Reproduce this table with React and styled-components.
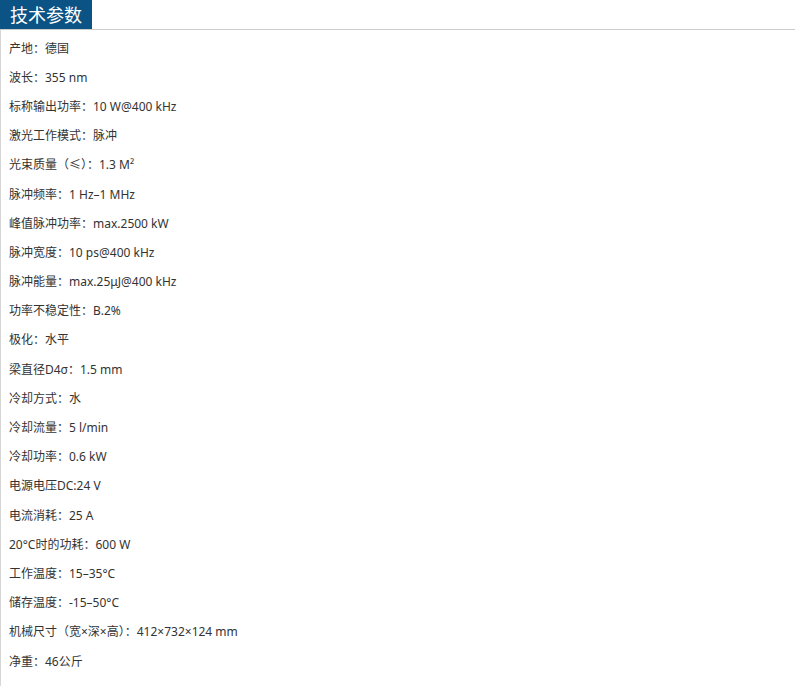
import styled, { createGlobalStyle } from "styled-components";

const GlobalStyle = createGlobalStyle`
  html, body {
    margin: 0;
    padding: 0;
    background: #fff;
  }
  body {
    font-family: "Noto Sans", "Noto Sans CJK SC", sans-serif;
  }
`;

const Wrapper = styled.div`
  width: 795px;
  height: 686px;
  overflow: hidden;
`;

const Header = styled.div`
  border-bottom: 1px solid #cccccc;
  height: 29px;
`;

const Title = styled.h2`
  display: inline-block;
  margin: 0;
  height: 29px;
  padding: 0 10px;
  background: #0b5384;
  color: #fff;
  font-family: "Noto Sans CJK SC", sans-serif;
  font-size: 18px;
  font-weight: normal;
  line-height: 29px;
`;

const Body = styled.div`
  border-left: 1px solid #d6d6d6;
  padding: 3px 0 0 8px;
  height: 660px;
`;

const Row = styled.p`
  margin: 0;
  height: 29.2px;
  display: flex;
  align-items: center;
  font-size: 12px;
  color: #333;
  white-space: nowrap;
`;

const specs = [
  "产地：德国",
  "波长：355 nm",
  "标称输出功率：10 W@400 kHz",
  "激光工作模式：脉冲",
  "光束质量（≤）：1.3 M²",
  "脉冲频率：1 Hz–1 MHz",
  "峰值脉冲功率：max.2500 kW",
  "脉冲宽度：10 ps@400 kHz",
  "脉冲能量：max.25μJ@400 kHz",
  "功率不稳定性：B.2%",
  "极化：水平",
  "梁直径D4σ：1.5 mm",
  "冷却方式：水",
  "冷却流量：5 l/min",
  "冷却功率：0.6 kW",
  "电源电压DC:24 V",
  "电流消耗：25 A",
  "20°C时的功耗：600 W",
  "工作温度：15–35°C",
  "储存温度：-15–50°C",
  "机械尺寸（宽×深×高）：412×732×124 mm",
  "净重：46公斤",
];

const App = () => {
  return (
    <Wrapper>
      <GlobalStyle />
      <Header>
        <Title>技术参数</Title>
      </Header>
      <Body>
        {specs.map((s) => (
          <Row key={s}>{s}</Row>
        ))}
      </Body>
    </Wrapper>
  );
};

export default App;
